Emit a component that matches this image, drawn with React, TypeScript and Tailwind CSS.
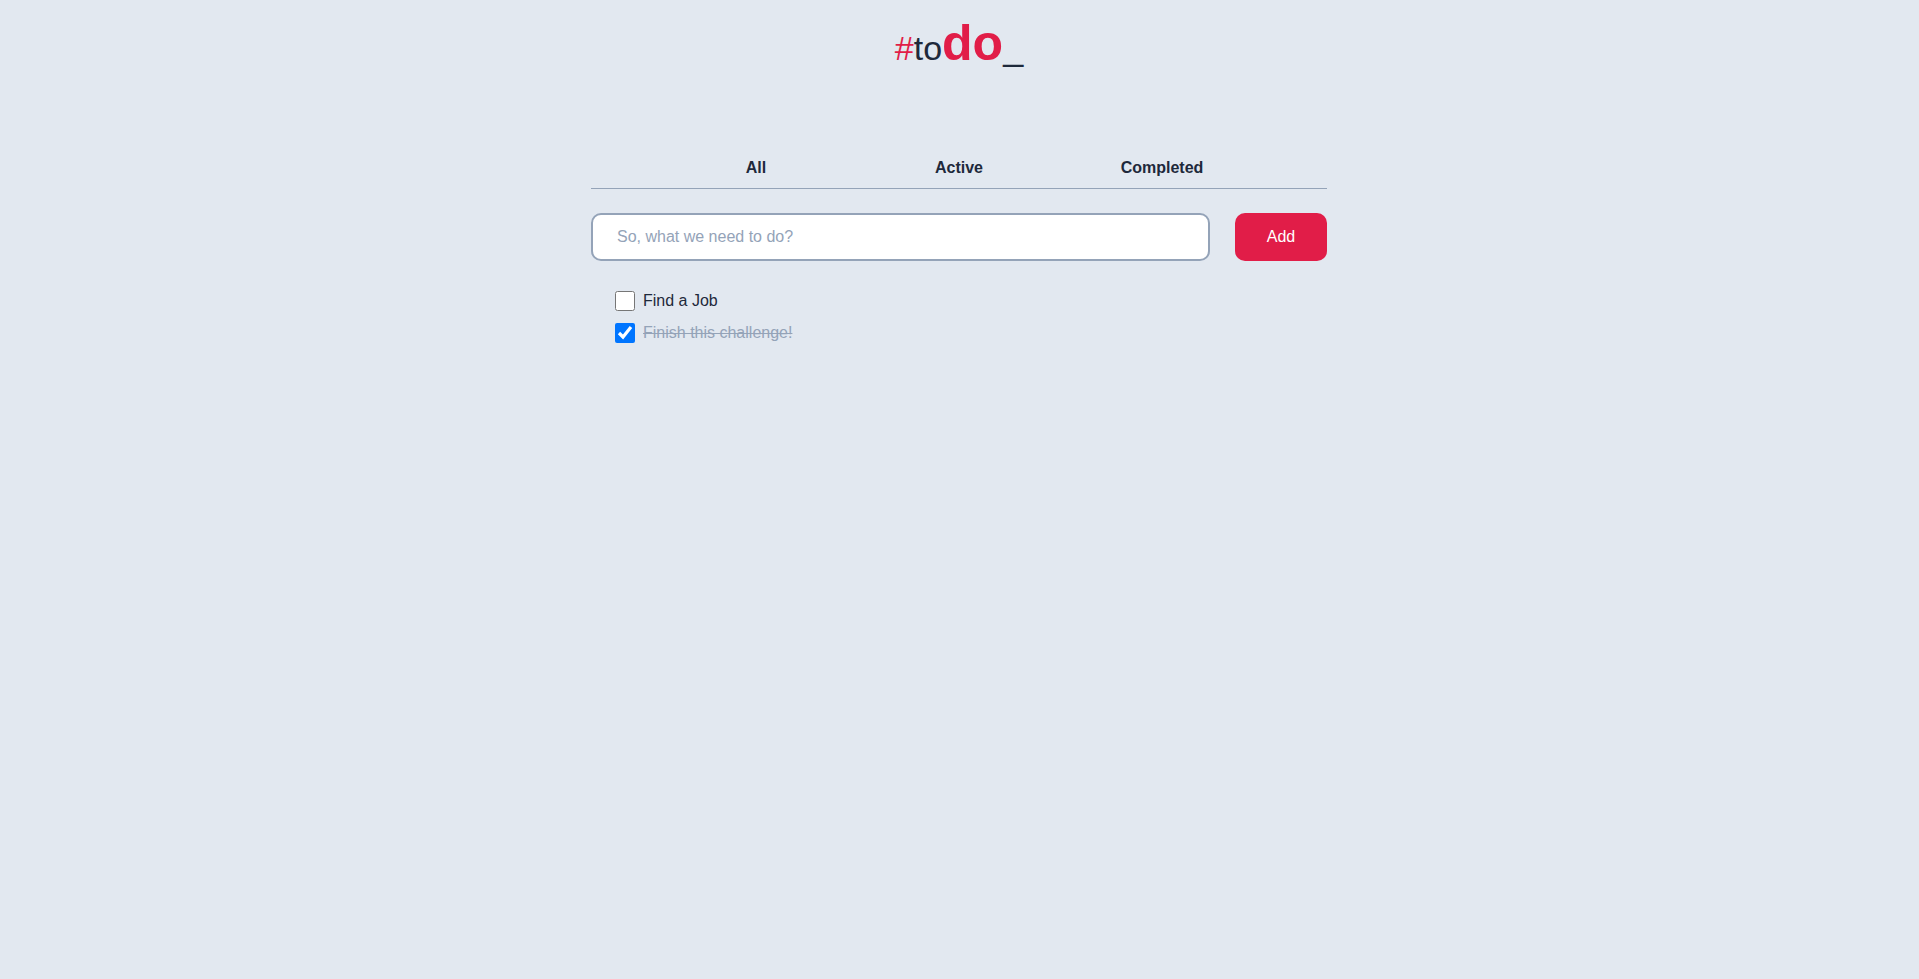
import React, { useState } from "react";

export default function App() {
  const [todos, setTodos] = useState([
    { id: 1, text: "Find a Job", done: false },
    { id: 2, text: "Finish this challenge!", done: true },
  ]);
  const toggle = (id: number) =>
    setTodos((t) => t.map((x) => (x.id === id ? { ...x, done: !x.done } : x)));

  return (
    <div
      className="min-h-screen bg-[#e2e8f0] text-[#1e293b] flex justify-center pr-px"
      style={{ fontFamily: '"Liberation Sans", Arial, sans-serif' }}
    >
      <div className="w-[736px]">
        <h1 className="flex justify-center items-baseline pt-[18px]">
          <span className="text-[34px] leading-none text-[#e11d48]">#</span>
          <span className="text-[34px] leading-none text-[#1e293b]">to</span>
          <span className="text-[50px] leading-none font-bold text-[#e11d48]">do</span>
          <span className="text-[36px] leading-none text-[#1e293b]">_</span>
        </h1>

        <nav className="mt-[80px] flex justify-center border-b border-[#94a3b8]">
          {["All", "Active", "Completed"].map((t) => (
            <button
              key={t}
              className="w-[203px] py-2 text-base leading-6 font-bold text-[#1e293b]"
            >
              {t}
            </button>
          ))}
        </nav>

        <div className="mt-6 flex gap-[25px]">
          <input
            className="flex-1 h-12 rounded-[10px] border-2 border-[#94a3b8] bg-white px-6 text-base text-[#1e293b] placeholder:text-[#94a3b8] outline-none"
            placeholder="So, what we need to do?"
          />
          <button className="w-[92px] h-12 rounded-[10px] bg-[#e11d48] text-base text-white">
            Add
          </button>
        </div>

        <ul className="mt-6 pl-6">
          {todos.map((t) => (
            <li key={t.id} className="flex h-8 items-center gap-2">
              <input
                type="checkbox"
                checked={t.done}
                onChange={() => toggle(t.id)}
                className="m-0 h-5 w-5"
              />
              <span
                className={
                  t.done
                    ? "text-base text-[#94a3b8] line-through"
                    : "text-base text-[#1e293b]"
                }
              >
                {t.text}
              </span>
            </li>
          ))}
        </ul>
      </div>
    </div>
  );
}
